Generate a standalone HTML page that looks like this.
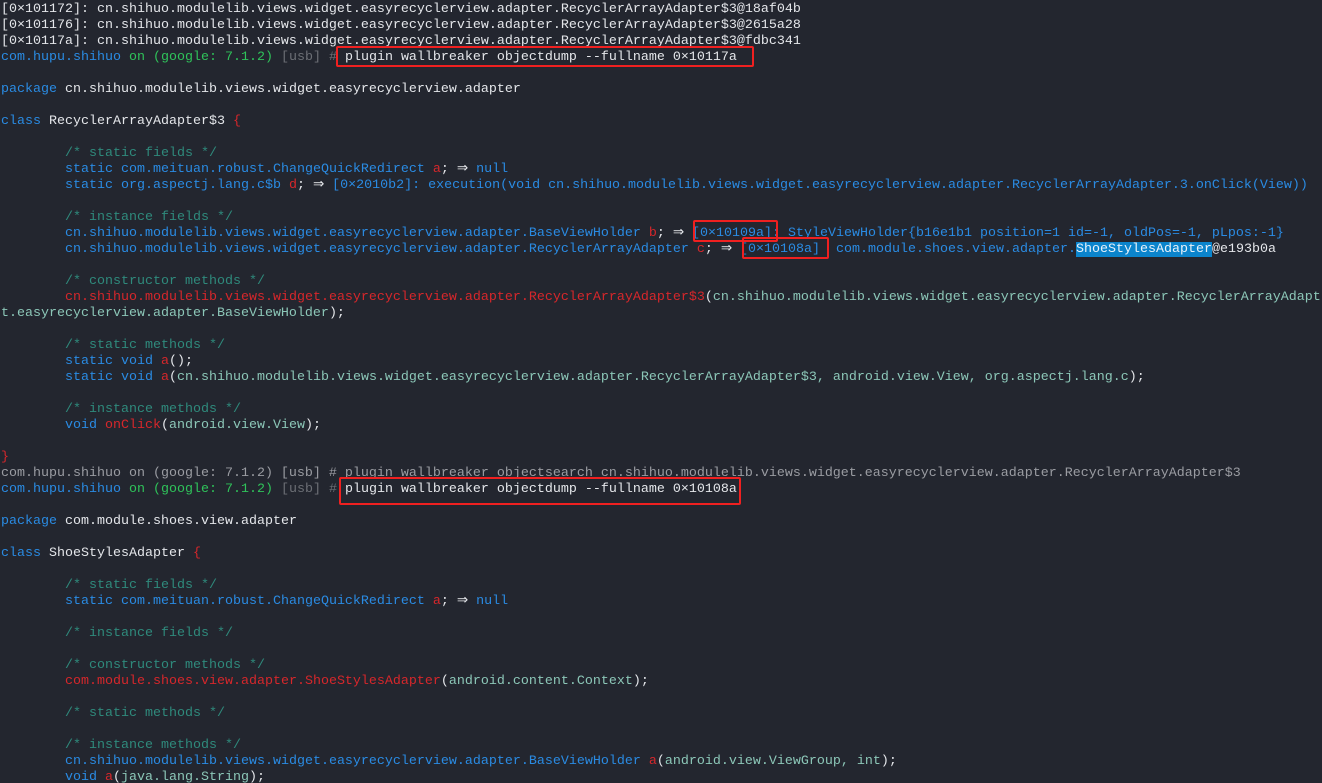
<!DOCTYPE html>
<html><head><meta charset="utf-8"><style>
html,body{margin:0;padding:0;background:#23262f;width:1322px;height:783px;overflow:hidden}
pre{margin:0;padding:2px 0 0 1px;font-family:"Liberation Mono",monospace;font-size:13.33px;line-height:16px;color:#e4e6ea;white-space:pre}
.b{color:#2a8be3}.r{color:#d6272b}.g{color:#2fc25a}.u{color:#6c6f75}.c{color:#2f8a7c}.p{color:#8cc7b8}.w{color:#e4e6ea}
.sel{background:#0b84cc;color:#e8f2fa}
.box{position:absolute;border:2.5px solid #f02020;border-radius:2px}
</style></head><body>
<pre>[0×101172]: cn.shihuo.modulelib.views.widget.easyrecyclerview.adapter.RecyclerArrayAdapter$3@18af04b
[0×101176]: cn.shihuo.modulelib.views.widget.easyrecyclerview.adapter.RecyclerArrayAdapter$3@2615a28
[0×10117a]: cn.shihuo.modulelib.views.widget.easyrecyclerview.adapter.RecyclerArrayAdapter$3@fdbc341
<span class="b">com.hupu.shihuo</span> <span class="g">on (google: 7.1.2)</span> <span class="u">[usb] #</span> plugin wallbreaker objectdump --fullname 0×10117a

<span class="b">package</span> cn.shihuo.modulelib.views.widget.easyrecyclerview.adapter

<span class="b">class</span> RecyclerArrayAdapter$3 <span class="r">{</span>

        <span class="c">/* static fields */</span>
        <span class="b">static com.meituan.robust.ChangeQuickRedirect</span> <span class="r">a</span>; ⇒ <span class="b">null</span>
        <span class="b">static org.aspectj.lang.c$b</span> <span class="r">d</span>; ⇒ <span class="b">[0×2010b2]: execution(void cn.shihuo.modulelib.views.widget.easyrecyclerview.adapter.RecyclerArrayAdapter.3.onClick(View))</span>

        <span class="c">/* instance fields */</span>
        <span class="b">cn.shihuo.modulelib.views.widget.easyrecyclerview.adapter.BaseViewHolder</span> <span class="r">b</span>; ⇒ <span class="b">[0×10109a]: StyleViewHolder{b16e1b1 position=1 id=-1, oldPos=-1, pLpos:-1}</span>
        <span class="b">cn.shihuo.modulelib.views.widget.easyrecyclerview.adapter.RecyclerArrayAdapter</span> <span class="r">c</span>; ⇒ <span class="b">[0×10108a]  com.module.shoes.view.adapter.<span class="sel">ShoeStylesAdapter</span></span><span class="w">@e193b0a</span>

        <span class="c">/* constructor methods */</span>
        <span class="r">cn.shihuo.modulelib.views.widget.easyrecyclerview.adapter.RecyclerArrayAdapter$3</span>(<span class="p">cn.shihuo.modulelib.views.widget.easyrecyclerview.adapter.RecyclerArrayAdapt</span>
<span class="p">t.easyrecyclerview.adapter.BaseViewHolder</span>);

        <span class="c">/* static methods */</span>
        <span class="b">static void</span> <span class="r">a</span>();
        <span class="b">static void</span> <span class="r">a</span>(<span class="p">cn.shihuo.modulelib.views.widget.easyrecyclerview.adapter.RecyclerArrayAdapter$3, android.view.View, org.aspectj.lang.c</span>);

        <span class="c">/* instance methods */</span>
        <span class="b">void</span> <span class="r">onClick</span>(<span class="p">android.view.View</span>);

<span class="r">}</span>
<span class="u" style="color:#9a9ca2">com.hupu.shihuo on (google: 7.1.2) [usb] # plugin wallbreaker objectsearch cn.shihuo.modulelib.views.widget.easyrecyclerview.adapter.RecyclerArrayAdapter$3</span>
<span class="b">com.hupu.shihuo</span> <span class="g">on (google: 7.1.2)</span> <span class="u">[usb] #</span> plugin wallbreaker objectdump --fullname 0×10108a

<span class="b">package</span> com.module.shoes.view.adapter

<span class="b">class</span> ShoeStylesAdapter <span class="r">{</span>

        <span class="c">/* static fields */</span>
        <span class="b">static com.meituan.robust.ChangeQuickRedirect</span> <span class="r">a</span>; ⇒ <span class="b">null</span>

        <span class="c">/* instance fields */</span>

        <span class="c">/* constructor methods */</span>
        <span class="r">com.module.shoes.view.adapter.ShoeStylesAdapter</span>(<span class="p">android.content.Context</span>);

        <span class="c">/* static methods */</span>

        <span class="c">/* instance methods */</span>
        <span class="b">cn.shihuo.modulelib.views.widget.easyrecyclerview.adapter.BaseViewHolder</span> <span class="r">a</span>(<span class="p">android.view.ViewGroup, int</span>);
        <span class="b">void</span> <span class="r">a</span>(<span class="p">java.lang.String</span>);
</pre>
<div class="box" style="left:336px;top:46px;width:414px;height:17px"></div>
<div class="box" style="left:693px;top:220px;width:81px;height:18px"></div>
<div class="box" style="left:742px;top:237px;width:83px;height:18px"></div>
<div class="box" style="left:339px;top:477px;width:398px;height:24px"></div>
</body></html>
